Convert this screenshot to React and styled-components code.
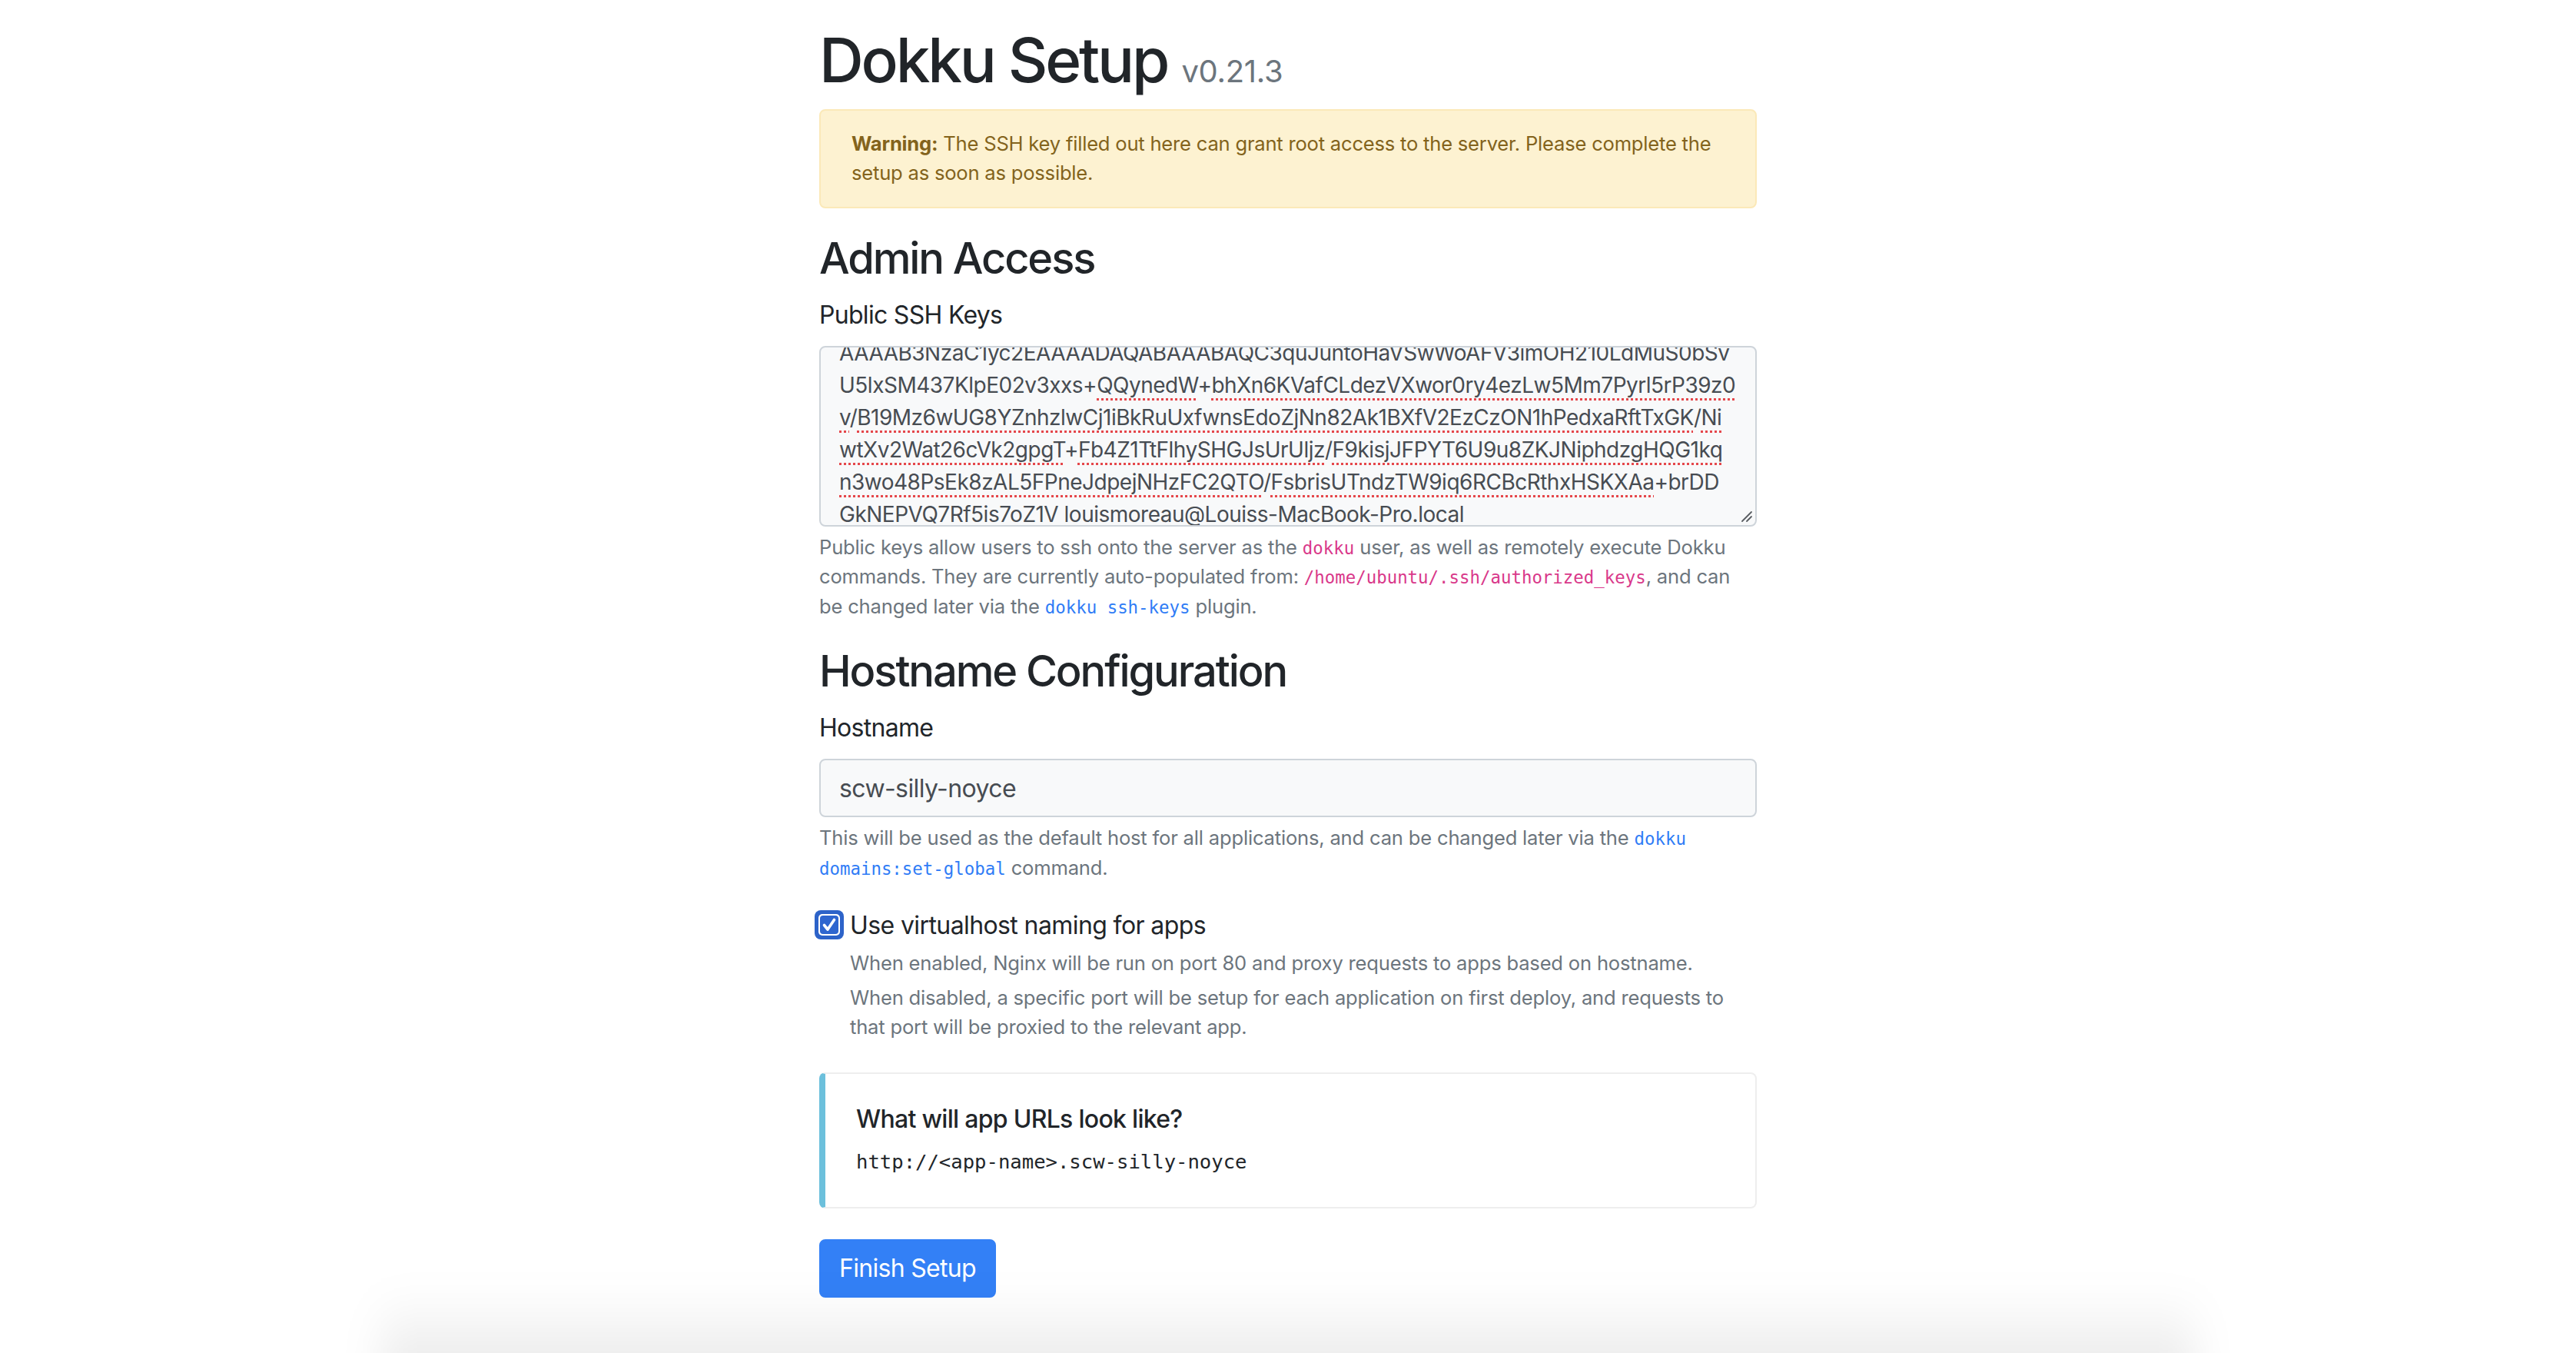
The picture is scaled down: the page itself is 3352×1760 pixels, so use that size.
import React from "react";
import styled, { createGlobalStyle } from "styled-components";

const GlobalStyle = createGlobalStyle`
  html, body {
    margin: 0;
    background: #fff;
  }
  body {
    font-family: Inter, "Noto Sans", sans-serif;
    color: #212529;
    overflow: hidden;
  }
  * {
    box-sizing: border-box;
  }
`;

const StyledContainer = styled.div`
  width: 1280px;
  margin: 0 auto;
  padding: 0 30px;
`;

const StyledTitle = styled.h1`
  margin: 0 0 16px;
  padding-top: 30px;
  font-size: 80px;
  font-weight: 500;
  line-height: 1.2;
  letter-spacing: -3.2px;
`;

const StyledVersion = styled.small`
  font-size: 40px;
  font-weight: 400;
  color: #6c757d;
  letter-spacing: -0.3px;
`;

const StyledAlert = styled.div`
  margin: 0 0 32px;
  padding: 24px 40px;
  border: 2px solid #fbe9b8;
  border-radius: 8px;
  background: #fdf2d1;
  color: #83631c;
  font-size: 25.6px;
  line-height: 1.5;
  letter-spacing: -0.22px;

  strong {
    font-weight: 700;
  }
`;

const StyledHeading = styled.h3`
  margin: 0 0 16px;
  font-size: 56px;
  font-weight: 500;
  line-height: 1.2;
  letter-spacing: -2.1px;
`;

const StyledGroup = styled.div`
  margin-bottom: 32px;
`;

const StyledLabel = styled.label`
  display: block;
  margin-bottom: 16px;
  font-size: 32px;
  line-height: 48px;
  letter-spacing: -0.7px;
`;

const StyledKeyBox = styled.div`
  position: relative;
  display: flex;
  flex-direction: column;
  justify-content: flex-end;
  height: 235px;
  padding: 0 24px;
  overflow: hidden;
  border: 2px solid #ced4da;
  border-radius: 8px;
  background: #f8f9fa;
  color: #474c52;
  font-size: 28px;
  line-height: 42px;
`;

const StyledKeyLines = styled.div`
  margin-bottom: -7px;
`;

const StyledKeyLine = styled.div`
  white-space: pre;
  letter-spacing: -0.5px;
`;

const StyledMisspelt = styled.span`
  text-decoration: underline dotted #e5474b;
  text-decoration-thickness: 3px;
  text-underline-offset: 7px;
`;

const StyledGrip = styled.svg`
  position: absolute;
  right: 3px;
  bottom: 3px;
  width: 18px;
  height: 18px;
`;

const StyledHelp = styled.small`
  display: block;
  margin-top: ${p => p.$gap || 8}px;
  font-size: 25.6px;
  line-height: 1.5;
  letter-spacing: -0.2px;
  color: #6c757d;
`;

const StyledCode = styled.code`
  font-family: "DejaVu Sans Mono", "Liberation Mono", monospace;
  font-size: 22.4px;
  letter-spacing: 0;
  color: #d9388a;
`;

const StyledLink = styled.a`
  color: #2f7cf6;
  text-decoration: none;

  code {
    color: inherit;
  }
`;

const StyledInput = styled.input`
  display: block;
  width: 100%;
  height: 76px;
  padding: 12px 24px;
  border: 2px solid #ced4da;
  border-radius: 8px;
  background: #f8f9fa;
  color: #474c52;
  font-family: inherit;
  font-size: 32px;
  line-height: 1.5;
  letter-spacing: -0.6px;
  outline: none;
`;

const StyledCheck = styled.div`
  position: relative;
  padding-left: 40px;
`;

const StyledBox = styled.svg`
  position: absolute;
  left: -6px;
  top: 4px;
  width: 38px;
  height: 38px;
`;

const StyledCheckLabel = styled.label`
  display: block;
  font-size: 32px;
  line-height: 48px;
  letter-spacing: -0.6px;
`;

const StyledCallout = styled.div`
  margin: 40px 0;
  padding: 40px;
  border: 2px solid #eee;
  border-left: 8px solid #6cc0dc;
  border-radius: 8px;
`;

const StyledCalloutTitle = styled.h5`
  margin: 0 0 16px;
  font-size: 32px;
  font-weight: 500;
  line-height: 1.2;
  letter-spacing: -0.7px;
`;

const StyledPre = styled.pre`
  margin: 0;
  font-family: "DejaVu Sans Mono", "Liberation Mono", monospace;
  font-size: 25.6px;
  line-height: 1.5;
  color: #212529;
`;

const StyledButton = styled.button`
  padding: 12px 24px;
  border: 2px solid #3380f6;
  border-radius: 8px;
  background: #3380f6;
  color: #fff;
  font-family: inherit;
  font-size: 32px;
  line-height: 1.5;
  letter-spacing: -0.7px;
  cursor: pointer;
`;

const StyledShade = styled.div`
  width: 2360px;
  height: 260px;
  margin: -10px auto 0;
  background: linear-gradient(to bottom, rgba(0, 0, 0, 0) 0, rgba(0, 0, 0, 0.075) 90px);
  filter: blur(26px);
`;

// key text as it wraps in the textarea; pairs are [text, misspelt]
const keyLines = [
  [["ssh-rsa", false]],
  [["AAAAB3NzaC1yc2EAAAADAQABAAABAQC3quJuntoHaVSwWoAFV3imOH210LdMuS0bSv", false]],
  [["U5lxSM437KlpE02v3xxs+", false], ["QQynedW", true], ["+", false], ["bhXn6KVafCLdezVXwor0ry4ezLw5Mm7Pyrl5rP39z0", true]],
  [["v", true], ["/", false], ["B19Mz6wUG8YZnhzlwCj1iBkRuUxfwnsEdoZjNn82Ak1BXfV2EzCzON1hPedxaRftTxGK", true], ["/", false], ["Ni", true]],
  [["wtXv2Wat26cVk2gpgT", true], ["+", false], ["Fb4Z1TtFlhySHGJsUrUljz", true], ["/", false], ["F9kisjJFPYT6U9u8ZKJNiphdzgHQG1kq", true]],
  [["n3wo48PsEk8zAL5FPneJdpejNHzFC2QTO", true], ["/", false], ["FsbrisUTndzTW9iq6RCBcRthxHSKXAa", true], ["+brDD", false]],
  [["GkNEPVQ7Rf5is7oZ1V louismoreau@Louiss-MacBook-Pro.local", false]],
];

const hostname = "scw-silly-noyce";

export default function App() {
  return (
    <>
      <GlobalStyle />
      <StyledContainer>
        <form onSubmit={e => e.preventDefault()}>
          <StyledTitle>
            Dokku Setup <StyledVersion>v0.21.3</StyledVersion>
          </StyledTitle>
          <StyledAlert role="alert">
            <strong>Warning:</strong> The SSH key filled out here can grant root access to the server. Please complete the setup as soon as possible.
          </StyledAlert>

          <StyledHeading>Admin Access</StyledHeading>
          <StyledGroup>
            <StyledLabel>Public SSH Keys</StyledLabel>
            <StyledKeyBox role="textbox" aria-multiline="true">
              <StyledKeyLines>
                {keyLines.map((parts, i) => (
                  <StyledKeyLine key={`line__${i}`}>
                    {parts.map(([text, bad], j) =>
                      bad ? <StyledMisspelt key={j}>{text}</StyledMisspelt> : <span key={j}>{text}</span>
                    )}
                  </StyledKeyLine>
                ))}
              </StyledKeyLines>
              <StyledGrip viewBox="0 0 18 18">
                <path d="M4 16 L16 4 M10 16 L16 10" stroke="#5a5e63" strokeWidth="1.8" strokeLinecap="round" />
              </StyledGrip>
            </StyledKeyBox>
            <StyledHelp>
              Public keys allow users to ssh onto the server as the <StyledCode>dokku</StyledCode> user, as well as remotely execute Dokku commands. They are currently auto-populated from: <StyledCode>/home/ubuntu/.ssh/authorized_keys</StyledCode>, and can be changed later via the <StyledLink href="#"><StyledCode>dokku ssh-keys</StyledCode></StyledLink> plugin.
            </StyledHelp>
          </StyledGroup>

          <StyledHeading>Hostname Configuration</StyledHeading>
          <StyledGroup>
            <StyledLabel htmlFor="hostname">Hostname</StyledLabel>
            <StyledInput id="hostname" type="text" defaultValue={hostname} />
            <StyledHelp>
              This will be used as the default host for all applications, and can be changed later via the <StyledLink href="#"><StyledCode>dokku domains:set-global</StyledCode></StyledLink> command.
            </StyledHelp>
          </StyledGroup>

          <StyledCheck>
            <StyledBox viewBox="0 0 38 38" role="checkbox" aria-checked="true">
              <rect x="0" y="0" width="38" height="38" rx="8" fill="#2d63c9" />
              <rect x="5" y="5" width="28" height="28" rx="5" fill="#fff" />
              <rect x="7" y="7" width="24" height="24" rx="4" fill="#2f66cf" />
              <path d="M12.5 19.5 L17 25 L25.5 12.5" stroke="#fff" strokeWidth="3.6" fill="none" strokeLinecap="round" strokeLinejoin="round" />
            </StyledBox>
            <StyledCheckLabel>Use virtualhost naming for apps</StyledCheckLabel>
            <StyledHelp $gap={6}>When enabled, Nginx will be run on port 80 and proxy requests to apps based on hostname.</StyledHelp>
            <StyledHelp $gap={6}>When disabled, a specific port will be setup for each application on first deploy, and requests to that port will be proxied to the relevant app.</StyledHelp>
          </StyledCheck>

          <StyledCallout>
            <StyledCalloutTitle>What will app URLs look like?</StyledCalloutTitle>
            <StyledPre><code>{`http://<app-name>.${hostname}`}</code></StyledPre>
          </StyledCallout>

          <StyledButton type="button">Finish Setup</StyledButton>
        </form>
      </StyledContainer>
      <StyledShade />
    </>
  );
}
